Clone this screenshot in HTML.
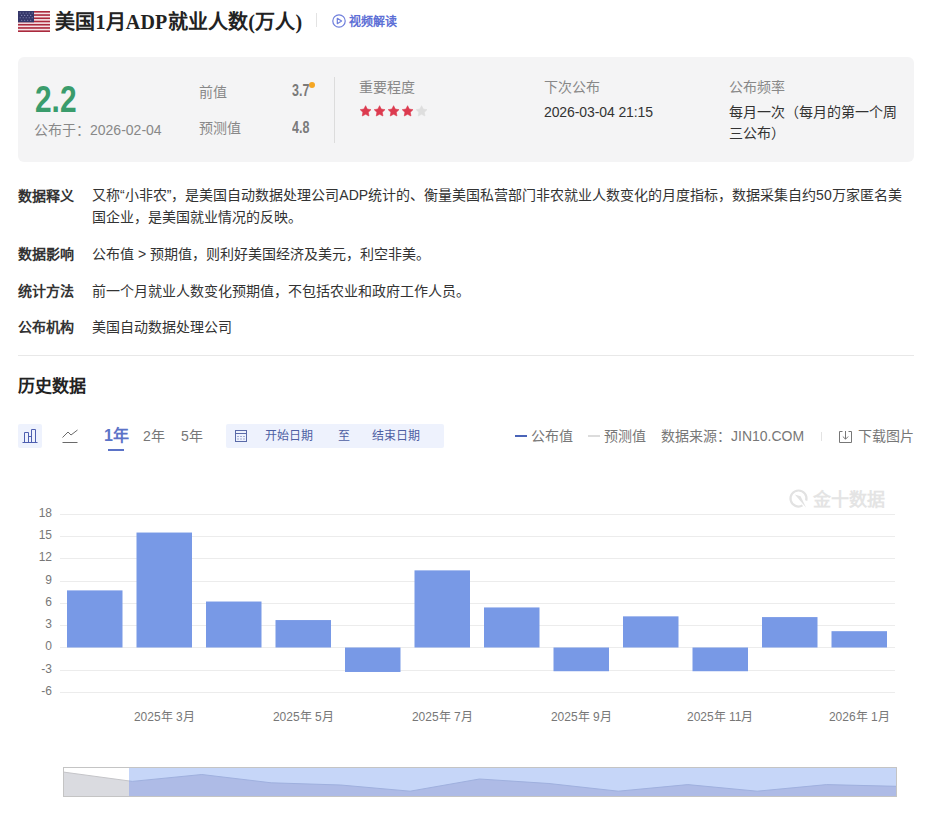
<!DOCTYPE html>
<html lang="zh-CN"><head><meta charset="utf-8">
<style>
*{margin:0;padding:0;box-sizing:border-box}
html,body{width:928px;height:818px;overflow:hidden;background:#fff}
body{position:relative;font-family:"Liberation Sans",sans-serif;color:#333}
.a{position:absolute;white-space:nowrap;line-height:1}
.g{color:#888}
.card{position:absolute;left:18px;top:57px;width:896px;height:105px;background:#f4f4f5;border-radius:6px}
.lbl{font-weight:bold;font-size:14px;color:#333}
.val{font-size:14px;color:#333}
.tb{font-size:14px;color:#777}
.ylab{position:absolute;font-size:12px;color:#777;text-align:right;width:40px;left:12px;line-height:1}
.xlab{position:absolute;font-size:12px;color:#777;line-height:1;white-space:nowrap;transform:translateX(-50%)}
</style></head><body>

<!-- header -->
<svg class="a" style="left:18px;top:11px" width="32" height="21" viewBox="0 0 32 21"><rect width="32" height="21" fill="#f6e4e7"/><g fill="#ab2a3d"><rect y="0.00" width="32" height="1.62"/><rect y="3.23" width="32" height="1.62"/><rect y="6.46" width="32" height="1.62"/><rect y="9.69" width="32" height="1.62"/><rect y="12.92" width="32" height="1.62"/><rect y="16.15" width="32" height="1.62"/><rect y="19.38" width="32" height="1.62"/></g><rect width="16" height="11.3" fill="#35376a"/><g fill="#9496c0"><circle cx="2.2" cy="2.0" r="0.55"/><circle cx="5.2" cy="2.0" r="0.55"/><circle cx="8.2" cy="2.0" r="0.55"/><circle cx="11.2" cy="2.0" r="0.55"/><circle cx="14.2" cy="2.0" r="0.55"/><circle cx="3.7" cy="4.4" r="0.55"/><circle cx="6.7" cy="4.4" r="0.55"/><circle cx="9.7" cy="4.4" r="0.55"/><circle cx="12.7" cy="4.4" r="0.55"/><circle cx="2.2" cy="6.8" r="0.55"/><circle cx="5.2" cy="6.8" r="0.55"/><circle cx="8.2" cy="6.8" r="0.55"/><circle cx="11.2" cy="6.8" r="0.55"/><circle cx="14.2" cy="6.8" r="0.55"/><circle cx="3.7" cy="9.2" r="0.55"/><circle cx="6.7" cy="9.2" r="0.55"/><circle cx="9.7" cy="9.2" r="0.55"/><circle cx="12.7" cy="9.2" r="0.55"/></g></svg>
<div class="a" style="left:55px;top:12px;font-size:20px;font-weight:bold;letter-spacing:0.2px;font-family:'Liberation Serif',serif;color:#222">美国1月ADP就业人数(万人)</div>
<div class="a" style="left:316px;top:13px;width:1px;height:14px;background:#e3e3e3"></div>
<svg class="a" style="left:332px;top:14px" width="14" height="14" viewBox="0 0 14 14"><circle cx="7" cy="7" r="6.2" fill="none" stroke="#6f7fdc" stroke-width="1.2"/><path d="M5.3 4.3 L9.6 7 L5.3 9.7 Z" fill="none" stroke="#6f7fdc" stroke-width="1.2" stroke-linejoin="round"/></svg>
<div class="a" style="left:349px;top:16px;font-size:12px;font-weight:bold;color:#5e70d6">视频解读</div>

<!-- card -->
<div class="card"></div>
<div class="a" style="left:35px;top:82px;font-size:36px;font-weight:bold;color:#3a9c6c;transform:scaleX(0.83);transform-origin:left top">2.2</div>
<div class="a g" style="left:34px;top:123px;font-size:14px">公布于：2026-02-04</div>
<div class="a g" style="left:199px;top:85px;font-size:14px">前值</div>
<div class="a" style="left:292px;top:83px;font-size:16px;font-weight:bold;color:#7a7a7a;transform:scaleX(0.78);transform-origin:left top">3.7</div>
<div class="a" style="left:309px;top:82px;width:6px;height:6px;border-radius:3px;background:#f5a623"></div>
<div class="a g" style="left:199px;top:121px;font-size:14px">预测值</div>
<div class="a" style="left:292px;top:119.5px;font-size:16px;font-weight:bold;color:#7a7a7a;transform:scaleX(0.78);transform-origin:left top">4.8</div>
<div class="a" style="left:334px;top:77px;width:1px;height:66px;background:#dcdcdc"></div>
<div class="a g" style="left:359px;top:80px;font-size:14px">重要程度</div>
<svg class="a" style="left:355px;top:100px" width="80" height="22" viewBox="355 100 80 22"><polygon points="365.60,105.70 367.28,109.09 371.02,109.64 368.31,112.28 368.95,116.01 365.60,114.25 362.25,116.01 362.89,112.28 360.18,109.64 363.92,109.09" fill="#dc3a4f" stroke="#dc3a4f" stroke-width="0.6" stroke-linejoin="round"/><polygon points="379.60,105.70 381.28,109.09 385.02,109.64 382.31,112.28 382.95,116.01 379.60,114.25 376.25,116.01 376.89,112.28 374.18,109.64 377.92,109.09" fill="#dc3a4f" stroke="#dc3a4f" stroke-width="0.6" stroke-linejoin="round"/><polygon points="393.60,105.70 395.28,109.09 399.02,109.64 396.31,112.28 396.95,116.01 393.60,114.25 390.25,116.01 390.89,112.28 388.18,109.64 391.92,109.09" fill="#dc3a4f" stroke="#dc3a4f" stroke-width="0.6" stroke-linejoin="round"/><polygon points="407.60,105.70 409.28,109.09 413.02,109.64 410.31,112.28 410.95,116.01 407.60,114.25 404.25,116.01 404.89,112.28 402.18,109.64 405.92,109.09" fill="#dc3a4f" stroke="#dc3a4f" stroke-width="0.6" stroke-linejoin="round"/><polygon points="421.60,105.70 423.28,109.09 427.02,109.64 424.31,112.28 424.95,116.01 421.60,114.25 418.25,116.01 418.89,112.28 416.18,109.64 419.92,109.09" fill="#dedede" stroke="#dedede" stroke-width="0.6" stroke-linejoin="round"/></svg>
<div class="a g" style="left:544px;top:80px;font-size:14px">下次公布</div>
<div class="a" style="left:544px;top:105px;font-size:14px;color:#333;letter-spacing:-0.1px">2026-03-04 21:15</div>
<div class="a g" style="left:729px;top:80px;font-size:14px">公布频率</div>
<div class="a" style="left:729px;top:102px;font-size:14px;line-height:21px;color:#333;white-space:normal;width:175px">每月一次（每月的第一个周<br>三公布）</div>

<!-- info rows -->
<div class="a lbl" style="left:18px;top:189px">数据释义</div>
<div class="a val" style="left:92px;top:184px;line-height:22px">又称“小非农”，是美国自动数据处理公司ADP统计的、衡量美国私营部门非农就业人数变化的月度指标，数据采集自约50万家匿名美<br>国企业，是美国就业情况的反映。</div>
<div class="a lbl" style="left:18px;top:247px">数据影响</div>
<div class="a val" style="left:92px;top:247px">公布值 &gt; 预期值，则利好美国经济及美元，利空非美。</div>
<div class="a lbl" style="left:18px;top:284px">统计方法</div>
<div class="a val" style="left:92px;top:284px">前一个月就业人数变化预期值，不包括农业和政府工作人员。</div>
<div class="a lbl" style="left:18px;top:320px">公布机构</div>
<div class="a val" style="left:92px;top:320px">美国自动数据处理公司</div>
<div class="a" style="left:18px;top:355px;width:896px;height:1px;background:#e8e8e8"></div>

<div class="a" style="left:18px;top:378px;font-size:17px;font-weight:bold;color:#222">历史数据</div>

<!-- toolbar -->
<div class="a" style="left:18px;top:424px;width:24px;height:24px;background:#eef2fd;border-radius:2px"></div>
<svg class="a" style="left:18px;top:424px" width="24" height="24" viewBox="0 0 24 24" fill="none" stroke="#4e5fb0" stroke-width="1">
<path d="M4.5 18.5 H19.5 M6.5 18.5 V8.5 H10.5 V18.5 M10.5 12.5 H13.5 M13.5 18.5 V5.5 H17.5 V18.5"/>
</svg>
<svg class="a" style="left:58px;top:424px" width="24" height="24" viewBox="0 0 24 24" fill="none" stroke="#6a6a6a" stroke-width="1">
<path d="M4.5 18.5 H19.5 M4.5 13.5 L10 8 L13 11 L19.5 6"/>
</svg>
<div class="a" style="left:104px;top:428px;font-size:16px;font-weight:bold;color:#5b73c7">1年</div>
<div class="a" style="left:108px;top:449px;width:16px;height:2px;background:#5b73c7"></div>
<div class="a tb" style="left:143px;top:429px">2年</div>
<div class="a tb" style="left:181px;top:429px">5年</div>
<div class="a" style="left:226px;top:424px;width:218px;height:24px;background:#eef2fd;border-radius:2px"></div>
<svg class="a" style="left:234px;top:429px" width="14" height="14" viewBox="0 0 14 14" fill="none" stroke="#5a6aa8" stroke-width="1">
<rect x="1.5" y="1.5" width="11" height="11"/><path d="M1.5 4.5 H12.5"/><path d="M3.5 7.5 h1 M6.5 7.5 h1 M9.5 7.5 h1 M3.5 10 h1 M6.5 10 h1 M9.5 10 h1"/>
</svg>
<div class="a" style="left:265px;top:430px;font-size:12px;color:#4e5fa3">开始日期</div>
<div class="a" style="left:338px;top:430px;font-size:12px;color:#4e5fa3">至</div>
<div class="a" style="left:372px;top:430px;font-size:12px;color:#4e5fa3">结束日期</div>

<div class="a" style="left:515px;top:435px;width:12px;height:2px;background:#4a64b8"></div>
<div class="a tb" style="left:531px;top:429px">公布值</div>
<div class="a" style="left:588px;top:435px;width:12px;height:2px;background:#dcdcdc"></div>
<div class="a tb" style="left:604px;top:429px">预测值</div>
<div class="a tb" style="left:661px;top:429px">数据来源：JIN10.COM</div>
<div class="a" style="left:821px;top:432px;width:1px;height:9px;background:#e3e3e3"></div>
<svg class="a" style="left:838px;top:430px" width="15" height="14" viewBox="0 0 15 14" fill="none" stroke="#777" stroke-width="1">
<path d="M4.5 1.5 H1.5 V12.5 H13.5 V1.5 H10.5 M7.5 1 V9 M4.8 6.5 L7.5 9.2 L10.2 6.5"/>
</svg>
<div class="a tb" style="left:858px;top:429px">下载图片</div>

<!-- chart -->
<div id="chart">
<svg class="a" style="left:0;top:460px" width="928" height="358" viewBox="0 460 928 358">
<path d="M60 514.5 H895" stroke="#ececec" stroke-width="1"/>
<path d="M60 536.5 H895" stroke="#ececec" stroke-width="1"/>
<path d="M60 558.5 H895" stroke="#ececec" stroke-width="1"/>
<path d="M60 581.5 H895" stroke="#ececec" stroke-width="1"/>
<path d="M60 603.5 H895" stroke="#ececec" stroke-width="1"/>
<path d="M60 625.5 H895" stroke="#ececec" stroke-width="1"/>
<path d="M60 670.5 H895" stroke="#ececec" stroke-width="1"/>
<path d="M60 692.5 H895" stroke="#ececec" stroke-width="1"/>
<path d="M60 647.5 H895" stroke="#ececec" stroke-width="1"/>
<rect x="67.00" y="590.39" width="55.5" height="57.11" fill="#7899e6"/>
<rect x="136.50" y="532.54" width="55.5" height="114.96" fill="#7899e6"/>
<rect x="206.00" y="601.52" width="55.5" height="45.98" fill="#7899e6"/>
<rect x="275.50" y="620.06" width="55.5" height="27.44" fill="#7899e6"/>
<rect x="345.00" y="647.50" width="55.5" height="24.48" fill="#7899e6"/>
<rect x="414.50" y="570.37" width="55.5" height="77.13" fill="#7899e6"/>
<rect x="484.00" y="607.45" width="55.5" height="40.05" fill="#7899e6"/>
<rect x="553.50" y="647.50" width="55.5" height="23.73" fill="#7899e6"/>
<rect x="623.00" y="616.35" width="55.5" height="31.15" fill="#7899e6"/>
<rect x="692.50" y="647.50" width="55.5" height="23.73" fill="#7899e6"/>
<rect x="762.00" y="617.09" width="55.5" height="30.41" fill="#7899e6"/>
<rect x="831.50" y="631.18" width="55.5" height="16.32" fill="#7899e6"/>
<path d="M806.2 500.6 A8 8 0 1 0 802.5 505.4" fill="none" stroke="#e2e2e2" stroke-width="2.2"/>
<polygon points="794.8,494.6 800.6,496.2 806.2,507.8" fill="#e2e2e2"/>
<text x="813" y="506" font-size="18" font-weight="900" fill="#e4e4e4" font-family="Liberation Sans, sans-serif">金十数据</text>
<defs><clipPath id="cl"><rect x="63" y="767" width="66" height="29"/></clipPath><clipPath id="cr"><rect x="129" y="767" width="767" height="29"/></clipPath></defs>
<rect x="63" y="767" width="833" height="29" fill="#fff"/>
<g clip-path="url(#cl)"><polygon points="63,796 63.0,772.0 132.4,781.4 201.8,774.5 271.2,782.8 340.7,785.0 410.1,791.2 479.5,779.0 548.9,783.5 618.3,791.2 687.8,784.6 757.2,791.2 826.6,784.6 896.0,786.3 896,796" fill="#dadbe0"/><polyline points="63.0,772.0 132.4,781.4 201.8,774.5 271.2,782.8 340.7,785.0 410.1,791.2 479.5,779.0 548.9,783.5 618.3,791.2 687.8,784.6 757.2,791.2 826.6,784.6 896.0,786.3" fill="none" stroke="#c4c4c8" stroke-width="1"/></g>
<g clip-path="url(#cr)"><rect x="129" y="767" width="767" height="29" fill="#c6d6f8"/><polygon points="63,796 63.0,772.0 132.4,781.4 201.8,774.5 271.2,782.8 340.7,785.0 410.1,791.2 479.5,779.0 548.9,783.5 618.3,791.2 687.8,784.6 757.2,791.2 826.6,784.6 896.0,786.3 896,796" fill="#aebbe6"/><polyline points="63.0,772.0 132.4,781.4 201.8,774.5 271.2,782.8 340.7,785.0 410.1,791.2 479.5,779.0 548.9,783.5 618.3,791.2 687.8,784.6 757.2,791.2 826.6,784.6 896.0,786.3" fill="none" stroke="#9fb0de" stroke-width="1"/></g>
<rect x="63.5" y="767.5" width="833" height="29" fill="none" stroke="#c4c4c4" stroke-width="1"/>
</svg>
<div class="ylab" style="top:506.5px">18</div>
<div class="ylab" style="top:528.5px">15</div>
<div class="ylab" style="top:550.5px">12</div>
<div class="ylab" style="top:573.5px">9</div>
<div class="ylab" style="top:595.5px">6</div>
<div class="ylab" style="top:617.5px">3</div>
<div class="ylab" style="top:639.5px">0</div>
<div class="ylab" style="top:662.5px">-3</div>
<div class="ylab" style="top:684.5px">-6</div>
<div class="xlab" style="left:164.25px;top:711px">2025年 3月</div>
<div class="xlab" style="left:303.25px;top:711px">2025年 5月</div>
<div class="xlab" style="left:442.25px;top:711px">2025年 7月</div>
<div class="xlab" style="left:581.25px;top:711px">2025年 9月</div>
<div class="xlab" style="left:720.25px;top:711px">2025年 11月</div>
<div class="xlab" style="left:859.25px;top:711px">2026年 1月</div>
</div>
</body></html>
